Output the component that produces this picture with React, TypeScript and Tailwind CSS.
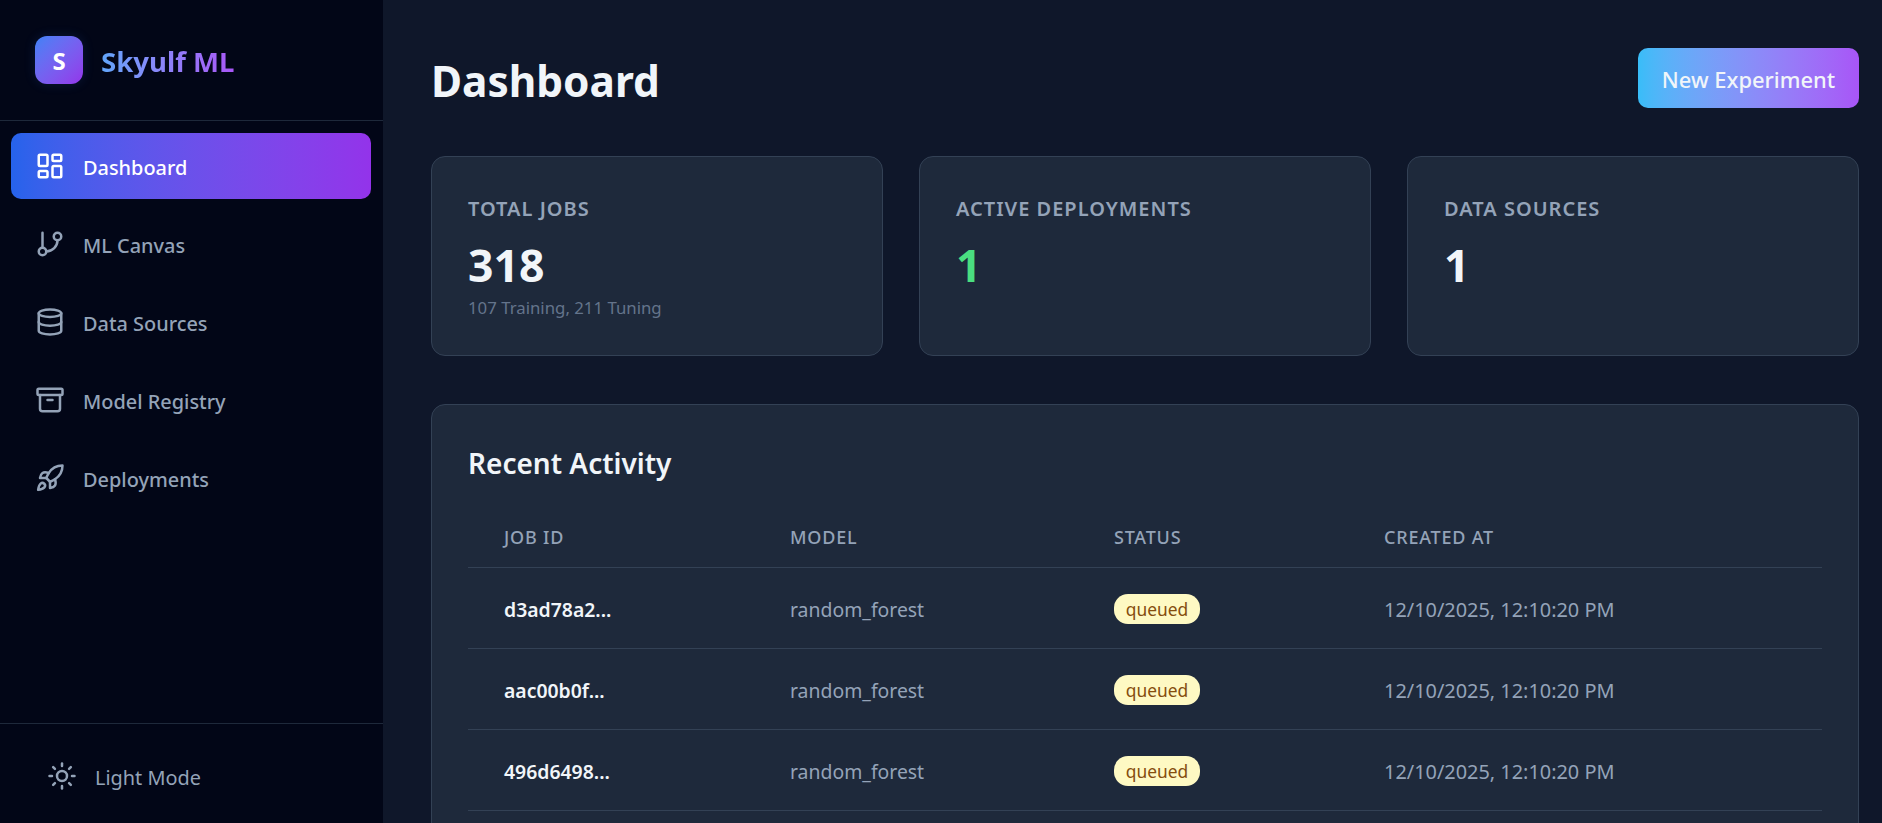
import { Archive, Database, GitBranch, LayoutDashboard, Rocket, Sun } from "lucide-react";

const navItems = [
  { label: "Dashboard", icon: LayoutDashboard, active: true },
  { label: "ML Canvas", icon: GitBranch },
  { label: "Data Sources", icon: Database },
  { label: "Model Registry", icon: Archive },
  { label: "Deployments", icon: Rocket },
];

const jobs = ["d3ad78a2...", "aac00b0f...", "496d6498..."];

function StatCard({ label, value, sub, green }: { label: string; value: string; sub?: string; green?: boolean }) {
  return (
    <div className="h-[200px] rounded-[14px] border border-[#334155] bg-[#1e293b] p-[36px] pt-[35px]">
      <div className="mb-[9px] text-[20px] leading-[34px] font-semibold tracking-[1px] text-[#94a3b8] uppercase">{label}</div>
      <div className={`text-[44.5px] leading-[59px] font-bold ${green ? "text-[#4ade80]" : "text-[#f1f5f9]"}`}>{value}</div>
      {sub && <div className="pt-[2px] text-[16.8px] leading-[24px] text-[#64748b]">{sub}</div>}
    </div>
  );
}

export default function App() {
  return (
    <div className="flex h-screen overflow-hidden bg-[#0f172a] font-['Noto_Sans','Open_Sans',sans-serif]">
      <aside className="flex w-[383px] shrink-0 flex-col bg-[#020617]">
        <div className="flex h-[121px] items-center gap-[18px] border-b border-[#1e293b] pl-[35px]">
          <div className="flex h-[48px] w-[48px] items-center justify-center rounded-[12px] bg-gradient-to-br from-[#3b82f6] to-[#9333ea] pt-[1px] text-[24px] font-bold text-white shadow-[0_0_12px_rgba(59,130,246,0.15)]">
            S
          </div>
          <span className="bg-gradient-to-r from-[#60a5fa] to-[#a855f7] bg-clip-text pt-[3px] text-[27.6px] font-bold text-transparent">Skyulf ML</span>
        </div>
        <nav className="flex flex-1 flex-col gap-[12px] pr-[12px] pl-[11px] pt-[12px]">
          {navItems.map((item) => (
            <div
              key={item.label}
              className={`flex h-[66px] items-center gap-[18px] rounded-[10px] pl-[24px] text-[19.9px] font-medium ${
                item.active ? "bg-gradient-to-r from-[#2563eb] to-[#9333ea] text-white" : "text-[#94a3b8]"
              }`}
            >
              <item.icon size={30} strokeWidth={2} />
              <span className="pt-[3px]">{item.label}</span>
            </div>
          ))}
        </nav>
        <div className="flex h-[100px] items-center gap-[18px] border-t border-[#1e293b] pt-[5px] pl-[47px] text-[19.9px] text-[#94a3b8]">
          <Sun size={30} strokeWidth={2} />
          <span className="pt-[4px]">Light Mode</span>
        </div>
      </aside>

      <main className="flex flex-1 flex-col overflow-hidden pr-[23px] pl-[48px]">
        <div className="flex h-[156px] shrink-0 items-start justify-between pt-[48px]">
          <h1 className="text-[42.4px] leading-[66px] font-bold text-[#f1f5f9]">Dashboard</h1>
          <button className="h-[60px] w-[221px] rounded-[10px] bg-gradient-to-r from-[#38bdf8] to-[#a855f7] pt-[4px] text-[21.9px] font-medium text-[#f1f5f9]">
            New Experiment
          </button>
        </div>

        <div className="grid shrink-0 grid-cols-3 gap-[36px]">
          <StatCard label="Total Jobs" value="318" sub="107 Training, 211 Tuning" />
          <StatCard label="Active Deployments" value="1" green />
          <StatCard label="Data Sources" value="1" />
        </div>

        <section className="mt-[48px] min-h-[500px] shrink-0 rounded-[14px] border border-[#334155] bg-[#1e293b] px-[36px] pt-[36px]">
          <h2 className="text-[28px] leading-[44px] font-semibold text-[#f1f5f9]">Recent Activity</h2>
          <table className="mt-[26px] w-full table-fixed border-collapse">
            <thead>
              <tr className="h-[56px] border-b border-[#334155] text-left text-[18px] font-medium tracking-[0.8px] text-[#94a3b8] uppercase">
                <th className="w-[286px] pb-[2px] pl-[36px] font-medium">Job ID</th>
                <th className="w-[324px] pb-[2px] pl-[36px] font-medium">Model</th>
                <th className="w-[270px] pb-[2px] pl-[36px] font-medium">Status</th>
                <th className="pb-[2px] pl-[36px] font-medium">Created At</th>
              </tr>
            </thead>
            <tbody>
              {jobs.map((id) => (
                <tr key={id} className="h-[81px] border-b border-[#334155] text-[19.4px] text-[#94a3b8]">
                  <td className="pt-[4px] pl-[36px] font-semibold text-[#f1f5f9]">{id}</td>
                  <td className="pt-[4px] pl-[36px]">random_forest</td>
                  <td className="pt-[2px] pl-[36px]">
                    <span className="inline-flex h-[30px] w-[86px] items-center justify-center rounded-[14px] bg-[#fef9c3] pt-[1px] text-[17.4px] text-[#854d0e]">
                      queued
                    </span>
                  </td>
                  <td className="pt-[4px] pl-[36px] text-[19.9px]">12/10/2025, 12:10:20 PM</td>
                </tr>
              ))}
            </tbody>
          </table>
        </section>
      </main>
    </div>
  );
}
